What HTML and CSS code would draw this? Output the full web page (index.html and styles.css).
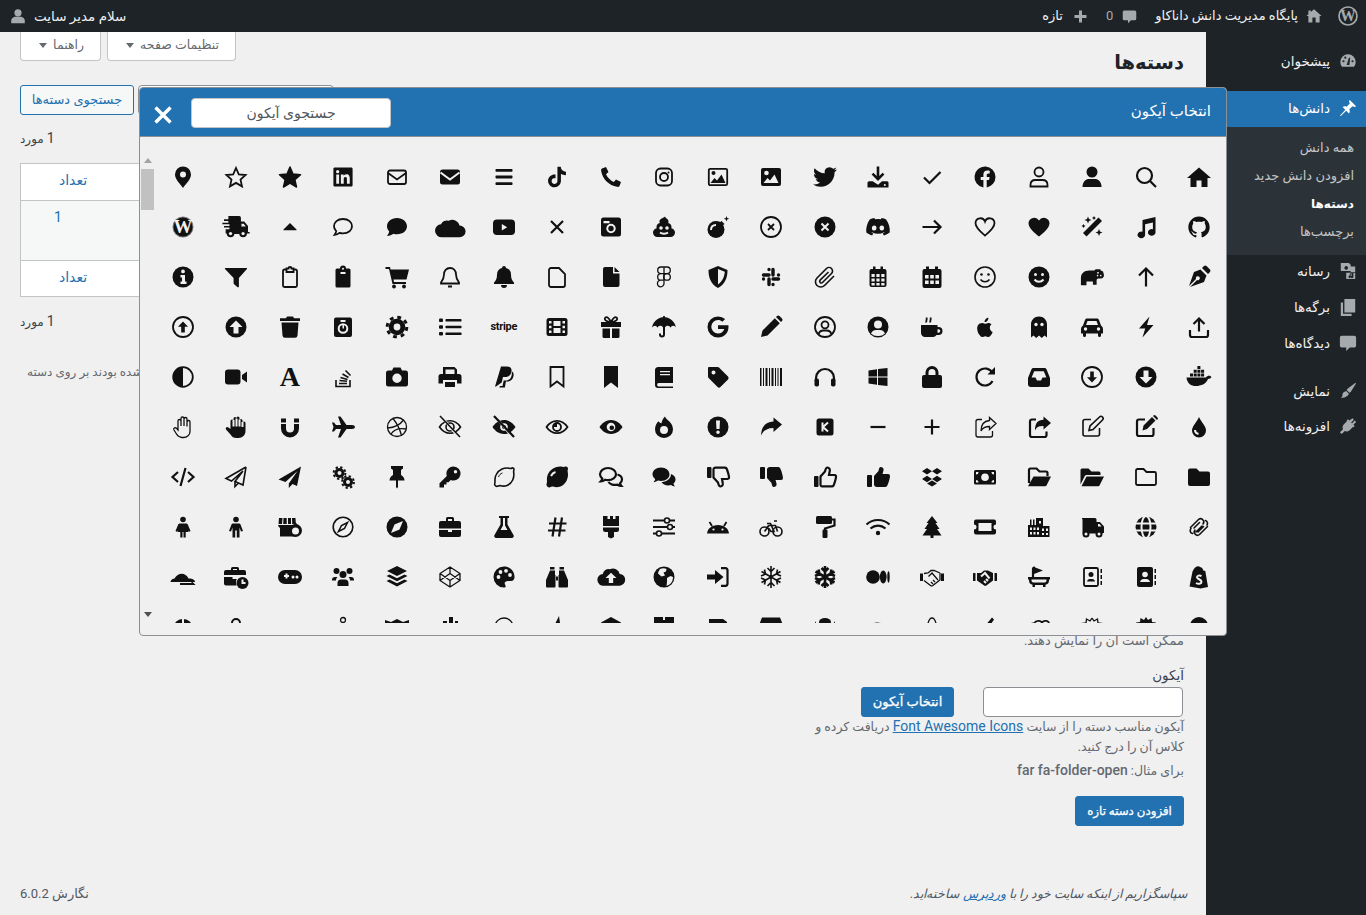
FILE: index.html
```html
<!DOCTYPE html>
<html lang="fa" dir="rtl">
<head>
<meta charset="utf-8">
<title>دسته‌ها</title>
<link rel="stylesheet" href="styles.css">
</head>
<body>
<header class="adminbar">
  <div class="ab-group">
    <svg class="ab-wp" viewBox="0 0 24 24"><circle class="ab-ring" cx="12" cy="12" r="10.800"/><text class="wp-w" x="12" y="18.500">W</text></svg>
    <svg class="ab-ic home" viewBox="0 0 20 20"><path d="M10 1.500 19.500 10H17v8h-5v-6H8v6H3v-8H.5L3 7.700V3h3v2z"/></svg>
    <a class="ab-text site">پایگاه مدیریت دانش داناکاو</a>
    <svg class="ab-ic cm" viewBox="0 0 20 20"><path d="M3 2h14a2 2 0 0 1 2 2v9a2 2 0 0 1-2 2h-5l-4 4v-4H3a2 2 0 0 1-2-2V4a2 2 0 0 1 2-2z"/></svg>
    <span class="ab-text zero">0</span>
    <svg class="ab-ic plus" viewBox="0 0 20 20"><path d="M8 2h4v6h6v4h-6v6H8v-6H2V8h6z"/></svg>
    <a class="ab-text">تازه</a>
  </div>
  <div class="ab-group user">
    <a class="ab-text greet">سلام مدیر سایت</a>
    <svg class="ab-ic usr" viewBox="0 0 20 20"><circle cx="10" cy="6" r="4.500"/><path d="M1.500 19v-3c0-3 3-5 5.500-5h6c2.500 0 5.500 2 5.500 5v3z"/></svg>
  </div>
</header>

<div class="shell">
  <nav class="sidebar">
    <a class="menu-item first"><svg class="mi" viewBox="0 0 20 20"><path fill-rule="evenodd" d="M10 2.500A8.500 8.500 0 0 0 1.500 11c0 2.200.8 4 2 5.500h13c1.200-1.500 2-3.300 2-5.500A8.500 8.500 0 0 0 10 2.500zM5 11.500a1.200 1.200 0 1 1 0-2.400 1.200 1.200 0 0 1 0 2.400zM7 7.500a1.200 1.200 0 1 1 0-2.400 1.200 1.200 0 0 1 0 2.400zM11.500 14.500h-3L11 6.500h1.500zM15 11.500a1.200 1.200 0 1 1 0-2.400 1.200 1.200 0 0 1 0 2.400z"/></svg><span>پیشخوان</span></a>
    <a class="menu-item active"><svg class="mi" viewBox="0 0 20 20"><path d="M12 1l7 7-1.500 1L15 8l-3.500 3.500c1 2 .5 4-.5 4.500l-3-3-6 6-1-.5 6-6.500-3-3c1-1 3-1.500 4.500-.5L12 5l-1-2.500z"/></svg><span>دانش‌ها</span></a>
    <div class="submenu">
      <a>همه دانش</a>
      <a>افزودن دانش جدید</a>
      <a class="current">دسته‌ها</a>
      <a>برچسب‌ها</a>
    </div>
    <a class="menu-item media"><svg class="mi" viewBox="0 0 20 20"><path d="M2 1h9l2 2v7H2zM6 6.500a2 2 0 1 0 0-.01zM8 12h10V19H8zM13 5h5v6h-5z"/><path class="mi-cut" d="M12 18a1.500 1.500 0 1 1 0-3V13l4-1v4.500a1.500 1.500 0 1 1-1.500-1.500V13.500l-1.500.5v3a1.500 1.500 0 0 1-1 1z"/></svg><span>رسانه</span></a>
    <a class="menu-item"><svg class="mi" viewBox="0 0 20 20"><path d="M6 1h12v15H6zM2 5h2.500v12.500H14V20H2z"/></svg><span>برگه‌ها</span></a>
    <a class="menu-item"><svg class="mi" viewBox="0 0 20 20"><path d="M3 2h14a2 2 0 0 1 2 2v9a2 2 0 0 1-2 2h-5l-4 4v-4H3a2 2 0 0 1-2-2V4a2 2 0 0 1 2-2z"/></svg><span>دیدگاه‌ها</span></a>
    <a class="menu-item sep"><svg class="mi" viewBox="0 0 20 20"><path d="M19 1.500l-1-.5-8.500 6.500-1 1.500 3 3 1.500-1zM8 10l3 3c-.5 2-3 4-9 5 2.500-2 1.500-3 2-5 .5-1.500 2.500-2.500 4-3z"/></svg><span>نمایش</span></a>
    <a class="menu-item tight"><svg class="mi" viewBox="0 0 20 20"><path d="M15 1.500l1.500 1.500-3 3 1 1 3-3L19 5.500l-3 3 1.500 1.500L16 11.500l-.5-.5-4 4c-2 1.500-4 1-5 .5L3 19l-2-2 3.500-3.500c-.5-1-1-3 .5-5l4-4-.5-.5L10 2.500 11.500 4z"/></svg><span>افزونه‌ها</span></a>
  </nav>

  <main class="main">
    <div class="top-row">
      <h1 class="title">دسته‌ها</h1>
      <div class="meta-links">
        <button class="meta-btn">تنظیمات صفحه <i class="caret"></i></button>
        <button class="meta-btn">راهنما <i class="caret"></i></button>
      </div>
    </div>

    <div class="columns">
      <section class="col-form">
        <p class="hint tail">ممکن است آن را نمایش دهند.</p>
        <label class="field-label">آیکون</label>
        <div class="field-row">
          <input class="field-input" type="text">
          <button class="btn-primary pick">انتخاب آیکون</button>
        </div>
        <p class="hint">آیکون مناسب دسته را از سایت <a class="link latin">Font Awesome Icons</a> دریافت کرده و<br>کلاس آن را درج کنید.</p>
        <p class="hint example">برای مثال: <b class="latin">far fa-folder-open</b></p>
        <button class="btn-primary submit">افزودن دسته تازه</button>
      </section>

      <section class="col-table">
        <div class="search-row">
          <button class="search-btn">جستجوی دسته‌ها</button>
          <input class="search-input" type="text">
        </div>
        <p class="count"><span class="latin">1</span> مورد</p>
        <table class="cats">
          <thead><tr><th>نام</th><th>توضیح</th><th>نامک</th><th class="num">تعداد</th></tr></thead>
          <tbody><tr><td>فناوری</td><td></td><td>tech</td><td class="val">1</td></tr></tbody>
          <tfoot><tr><th>نام</th><th>توضیح</th><th>نامک</th><th class="num">تعداد</th></tr></tfoot>
        </table>
        <p class="count lower"><span class="latin">1</span> مورد</p>
        <p class="note">با حذف یک دسته نوشته‌هایی که فقط به آن اختصاص داده شده بودند بر روی دسته</p>
      </section>
    </div>

    <footer class="footer">
      <em>سپاسگزاریم از اینکه سایت خود را با <a class="link">وردپرس</a> ساخته‌اید.</em>
      <span class="version">نگارش 6.0.2</span>
    </footer>
  </main>
</div>

<div class="picker">
  <div class="picker-head">
    <h2 class="picker-title">انتخاب آیکون</h2>
    <div class="picker-tools">
      <input class="picker-search" type="text" placeholder="جستجوی آیکون">
      <svg class="picker-close" viewBox="0 0 20 20"><path d="M2.500 2.500l15 15M17.500 2.500l-15 15"/></svg>
    </div>
  </div>
  <div class="picker-body">
    <div class="grid">
<!-- row 1 -->
<svg class="i" viewBox="0 0 24 24"><path d="M12 2.500 24 13h-3.500v9h-6v-6.500h-5V22h-6v-9H0z"/></svg>
<svg class="i o" viewBox="0 0 24 24"><circle cx="10.500" cy="10.500" r="7.500"/><path d="M16 16l6 6"/></svg>
<svg class="i" viewBox="0 0 24 24"><circle cx="12" cy="7" r="5.500"/><path d="M2.500 22c0-5.500 3.500-8 6.500-8h6c3 0 6.500 2.500 6.500 8z"/></svg>
<svg class="i o t" viewBox="0 0 24 24"><circle cx="12" cy="7" r="4.500"/><path d="M3.500 21.500V20c0-3 2-5 5-5h7c3 0 5 2 5 5v1.500z"/></svg>
<svg class="i" viewBox="0 0 24 24"><path d="M22.500 12a10.500 10.500 0 1 0-12.100 10.400v-7.300H7.700V12h2.700V9.700c0-2.600 1.600-4.100 4-4.100 1.100 0 2.300.2 2.300.2v2.600h-1.300c-1.300 0-1.700.8-1.700 1.600V12h2.900l-.5 3.100h-2.400v7.300A10.500 10.500 0 0 0 22.500 12z"/></svg>
<svg class="i o" viewBox="0 0 24 24"><path d="M4 12.500l5.500 5.500L20.500 7"/></svg>
<svg class="i" viewBox="0 0 24 24"><path d="M10.700 1.500h2.600v9.500l3.300-3.300 1.800 1.800-6.400 6.400-6.400-6.400 1.800-1.800 3.300 3.300zM1.500 18c0-1 .8-1.700 1.700-1.700h3.500l5.300 3.400 4-3.400h5c1 0 1.500.8 1.500 1.700v4.500H1.500z"/><circle class="b" cx="18.800" cy="20" r="1"/></svg>
<svg class="i" viewBox="0 0 24 24"><path d="M23.950 4.570a10 10 0 0 1-2.820.77 4.960 4.960 0 0 0 2.160-2.720c-.95.55-2 .96-3.120 1.190a4.920 4.920 0 0 0-8.380 4.480C7.690 8.100 4.070 6.130 1.640 3.160a4.820 4.820 0 0 0-.66 2.470c0 1.710.87 3.210 2.190 4.100a4.900 4.900 0 0 1-2.230-.61v.06c0 2.380 1.690 4.370 3.950 4.820a5 5 0 0 1-2.210.08c.63 1.950 2.450 3.370 4.600 3.410A9.870 9.870 0 0 1 0 19.540a13.940 13.940 0 0 0 7.550 2.210c9.060 0 14-7.500 14-13.980 0-.21 0-.42-.02-.63a9.940 9.940 0 0 0 2.460-2.550z"/></svg>
<svg class="i" viewBox="0 0 24 24"><rect x="2" y="3" width="20" height="18" rx="2"/><circle class="b" cx="7.500" cy="8" r="2.300"/><path class="b" d="M4.500 18l4-5 2.500 2.500 4.500-6 4 8.500z"/></svg>
<svg class="i" viewBox="0 0 24 24"><rect class="sk" x="2.800" y="3.800" width="18.400" height="16.400" rx="1.500"/><circle cx="7.500" cy="8" r="2"/><path d="M4.500 18l4-5 2.500 2.500 4.500-6 4 8.500z"/></svg>
<svg class="i" viewBox="0 0 24 24"><rect class="sk" x="4" y="3.500" width="16" height="17" rx="4.500"/><circle class="sk" cx="12" cy="12" r="4"/><circle cx="16.500" cy="7.500" r="1"/></svg>
<svg class="i" viewBox="0 0 24 24"><path d="M7 2 3 3.500C2 4 2 5 2.200 6 3.500 14 10 20.500 18 21.800c1 .2 2 .2 2.500-.8L22 17l-5-2.500-2.200 2.500C11.500 15.500 8.500 12.500 7 9.200L9.500 7z"/></svg>
<svg class="i" viewBox="-2 -2 28 28"><path d="M12.525.02c1.310-.02 2.610-.01 3.910-.02.08 1.530.63 3.090 1.750 4.170 1.120 1.110 2.700 1.620 4.240 1.790v4.030c-1.440-.05-2.890-.35-4.200-.97-.57-.26-1.100-.59-1.620-.93-.01 2.920.01 5.840-.02 8.750-.08 1.400-.54 2.790-1.350 3.940-1.310 1.920-3.580 3.170-5.910 3.210-1.430.08-2.860-.31-4.080-1.030-2.020-1.190-3.440-3.370-3.650-5.710-.02-.5-.03-1-.01-1.490.18-1.900 1.120-3.720 2.580-4.960 1.660-1.440 3.980-2.130 6.150-1.720.02 1.480-.04 2.960-.04 4.440-.99-.32-2.150-.23-3.020.37-.63.41-1.110 1.040-1.360 1.750-.21.51-.15 1.070-.14 1.610.24 1.640 1.820 3.020 3.500 2.870 1.120-.01 2.190-.66 2.770-1.610.19-.33.4-.67.41-1.060.1-1.790.06-3.570.07-5.360.01-4.030-.01-8.050.02-12.070z"/></svg>
<svg class="i" viewBox="0 0 24 24"><rect x="3.500" y="4" width="17" height="2.800" rx=".8"/><rect x="3.500" y="10.600" width="17" height="2.800" rx=".8"/><rect x="3.500" y="17.200" width="17" height="2.800" rx=".8"/></svg>
<svg class="i" viewBox="0 0 24 24"><rect x="2" y="4.500" width="20" height="15" rx="2.500"/><path class="bs" d="M2.500 7.500 12 14.500l9.500-7"/></svg>
<svg class="i" viewBox="0 0 24 24"><rect class="sk" x="3" y="5.500" width="18" height="13.500" rx="2"/><path class="sk" d="M3 8l9 6.500L21 8"/></svg>
<svg class="i" viewBox="-3 -3 30 30"><path fill-rule="evenodd" d="M20.447 20.452h-3.554v-5.569c0-1.328-.027-3.037-1.852-3.037-1.853 0-2.136 1.445-2.136 2.939v5.667H9.351V9h3.414v1.561h.046c.477-.9 1.637-1.850 3.370-1.850 3.601 0 4.267 2.370 4.267 5.455v6.286zM5.337 7.433a2.062 2.062 0 0 1-2.063-2.065 2.064 2.064 0 1 1 2.063 2.065zm1.782 13.019H3.555V9h3.564v11.452zM22.225 0H1.771C.792 0 0 .774 0 1.729v20.542C0 23.227.792 24 1.771 24h20.451C23.200 24 24 23.227 24 22.271V1.729C24 .774 23.200 0 22.222 0h.003z"/></svg>
<svg class="i" viewBox="0 0 24 24"><path d="M12 2l3 7 7.500.8-5.600 5 1.600 7.200-6.500-3.800-6.500 3.800 1.600-7.200-5.600-5L9 9z" stroke="#111" stroke-width="1.500" stroke-linejoin="round"/></svg>
<svg class="i" viewBox="0 0 24 24"><path class="sk" d="M12 3l2.800 6.300 6.800.7-5.100 4.600 1.500 6.800-6-3.500-6 3.500 1.500-6.800L2.400 10l6.800-.7z"/></svg>
<svg class="i" viewBox="0 0 24 24"><path fill-rule="evenodd" d="M12 1.500a8 8 0 0 0-8 8c0 5 5 9 8 13.500 3-4.500 8-8.500 8-13.500a8 8 0 0 0-8-8zm0 11a3 3 0 1 1 0-6 3 3 0 0 1 0 6z"/></svg>
<!-- row 2 -->
<svg class="i" viewBox="-1.500 -1.500 27 27"><path d="M12 .297c-6.630 0-12 5.373-12 12 0 5.303 3.438 9.800 8.205 11.385.6.113.82-.258.82-.577 0-.285-.01-1.040-.015-2.040-3.338.724-4.042-1.610-4.042-1.610C4.422 18.070 3.633 17.700 3.633 17.700c-1.087-.744.084-.729.084-.729 1.205.084 1.838 1.236 1.838 1.236 1.070 1.835 2.809 1.305 3.495.998.108-.776.417-1.305.76-1.605-2.665-.3-5.466-1.332-5.466-5.930 0-1.310.465-2.380 1.235-3.220-.135-.303-.54-1.523.105-3.176 0 0 1.005-.322 3.300 1.230.96-.267 1.980-.399 3-.405 1.020.006 2.040.138 3 .405 2.280-1.552 3.285-1.230 3.285-1.230.645 1.653.24 2.873.12 3.176.765.84 1.230 1.910 1.230 3.220 0 4.610-2.805 5.625-5.475 5.920.42.36.81 1.096.81 2.220 0 1.606-.015 2.896-.015 3.286 0 .315.21.69.825.57C20.565 22.092 24 17.592 24 12.297c0-6.627-5.373-12-12-12"/></svg>
<svg class="i" viewBox="0 0 24 24"><path d="M21.500 2 8.500 5v11.800a3.800 3.300 0 1 0 2.600 3.100V9.300l7.800-1.800v6.800a3.800 3.300 0 1 0 2.600 3.100z"/></svg>
<svg class="i" viewBox="0 0 24 24"><path d="M18.500 2.500l3.500 3.500L6.500 21.500 3 18z"/><path d="M8 1.500l1 2.500 2.500 1-2.500 1-1 2.500-1-2.500L4.500 5l2.500-1zM19 14l1 2.500 2.500 1-2.500 1-1 2.500-1-2.500-2.500-1 2.500-1zM14 1l.7 1.300L16 3l-1.300.7L14 5l-.7-1.300L12 3l1.300-.7zM3.500 9l.7 1.300L5.500 11l-1.300.7-.7 1.300-.7-1.300L1.500 11l1.300-.7z"/></svg>
<svg class="i" viewBox="0 0 24 24"><path d="M12 21.500C8 18 1.500 13.500 1.500 8A5.700 5.700 0 0 1 12 5.500 5.700 5.700 0 0 1 22.500 8c0 5.500-6.500 10-10.500 13.500z"/></svg>
<svg class="i o t" viewBox="0 0 24 24"><path d="M12 20.500C8.500 17.500 2.500 13 2.500 8A4.900 4.900 0 0 1 12 6.500 4.900 4.900 0 0 1 21.500 8c0 5-6 9.500-9.500 12.500z"/></svg>
<svg class="i o" viewBox="0 0 24 24"><path d="M2.500 12H20.500M14 5.500l6.500 6.500-6.500 6.500"/></svg>
<svg class="i" viewBox="0 0 24 24"><path d="M20.300 4.400A19 19 0 0 0 15.600 3l-.6 1.300a18 18 0 0 0-6 0L8.400 3a19 19 0 0 0-4.700 1.400C.7 8.900-.1 13.200.3 17.500a19 19 0 0 0 5.800 3l1.200-2a12 12 0 0 1-1.900-.9l.5-.4a13.700 13.700 0 0 0 12.200 0l.5.4a12 12 0 0 1-1.900.9l1.200 2a19 19 0 0 0 5.800-3c.5-5-.8-9.200-3.600-13.100z"/><ellipse class="b" cx="8.200" cy="13" rx="2.300" ry="2.600"/><ellipse class="b" cx="15.800" cy="13" rx="2.300" ry="2.600"/></svg>
<svg class="i" viewBox="0 0 24 24"><circle cx="12" cy="12" r="10.500"/><path class="bs" d="M8.500 8.500l7 7M15.500 8.500l-7 7" stroke-width="2.600"/></svg>
<svg class="i" viewBox="0 0 24 24"><circle class="sk" cx="12" cy="12" r="10"/><path class="sk" d="M9 9l6 6M15 9l-6 6"/></svg>
<svg class="i" viewBox="0 0 24 24"><circle cx="10" cy="14.500" r="8.500"/><path d="M15.500 6l3 3-2.500 2-3-3z"/><path d="M20.500 1l.7 2 2 .7-2 .7-.7 2-.7-2-2-.7 2-.7z"/><path class="bs" d="M5 15c0-3 2-5 5-5" stroke-width="1.800"/></svg>
<svg class="i" viewBox="0 0 24 24"><path d="M13 1.500c.5 2 3.500 2 3.500 5 0 .5 0 1-.3 1.500 1.800.3 3.300 2 3.300 4 0 .5 0 .8-.2 1.300 2 .4 3.700 2.100 3.700 4.200 0 2.500-2 4.500-4.500 4.500h-13C3 22 1 20 1 17.500c0-2 1.700-3.800 3.700-4.200-.2-.5-.2-.8-.2-1.300 0-2 1.500-3.700 3.300-4-.3-.5-.3-1-.3-1.500 0-3 3-3 5.500-5z"/><circle class="b" cx="9" cy="13" r="1.800"/><circle class="b" cx="15" cy="13" r="1.800"/><path class="bs" d="M8 17.500c2 1.500 6 1.500 8 0" stroke-width="1.700"/></svg>
<svg class="i" viewBox="0 0 24 24"><rect x="2" y="2.500" width="20" height="19" rx="2.500"/><path class="b" d="M4.500 6h6v2.200h-6z"/><circle class="b" cx="12" cy="13.500" r="4.700"/><circle cx="12" cy="13.500" r="2.700"/></svg>
<svg class="i o" viewBox="0 0 24 24"><path d="M6 6l12 12M18 6 6 18"/></svg>
<svg class="i" viewBox="0 0 24 24"><rect x="1" y="4.500" width="22" height="15.500" rx="4"/><path class="b" d="M9.800 9l5.400 3.200-5.400 3.200z"/></svg>
<svg class="i" viewBox="2 2 20 20"><path d="M6 20.500A5.500 5.500 0 0 1 -.5 15 5.500 5.500 0 0 1 4.500 9.700 5.200 5.200 0 0 1 11 6.800 6.300 6.300 0 0 1 20 10.800 5 5 0 0 1 25 15.500a5 5 0 0 1-5 5z"/></svg>
<svg class="i" viewBox="0 0 24 24"><path d="M12 3C6 3 2 6.800 2 11.300c0 2 .8 3.800 2.200 5.200C3.800 18.500 2.500 20 2 21c2.500 0 5-1 6.500-2.200a12 12 0 0 0 3.500.5c6 0 10-3.600 10-8S18 3 12 3z"/></svg>
<svg class="i" viewBox="0 0 24 24"><path class="sk" d="M12 4C6.500 4 3 7.300 3 11.300c0 2 .8 3.500 2.200 4.800-.3 1.800-1 2.800-1.700 3.800 2-.2 3.800-1 5-2 1.200.4 2.200.5 3.500.5 5.500 0 9-3.200 9-7.100S17.500 4 12 4z"/></svg>
<svg class="i" viewBox="0 0 24 24"><path d="M12 8l6.500 6.500a.5.5 0 0 1-.4.8H5.900a.5.5 0 0 1-.4-.8z"/></svg>
<svg class="i" viewBox="1 2 22 22"><path d="M5 3h10a1.500 1.500 0 0 1 1.500 1.500V8h3l3.500 4v5.500h1.500V19h-3v.5h-12V19H2.500v-4H6v-1.500H1V12h5V10.500H-.5V9H5V7.500H1V6h4z"/><circle cx="7" cy="19" r="3.500"/><circle cx="18.500" cy="19" r="3.500"/><circle class="b" cx="7" cy="19" r="1.500"/><circle class="b" cx="18.500" cy="19" r="1.500"/><path class="b" d="M17 10h2l2 2.500h-4z"/></svg>
<svg class="i" viewBox="0 0 24 24"><circle cx="12" cy="12" r="10.500" fill="#777"/><circle cx="12" cy="12" r="9.500"/><text class="wp-w light" x="12" y="18.200">W</text></svg>
<!-- row 3 -->
<svg class="i" viewBox="0 0 24 24"><path d="M15 3l6 6 2-2a2 2 0 0 0 0-2.500L19.500 1a2 2 0 0 0-2.500 0zM13.500 4.500 7 7 2 21l7-7a2 2 0 1 1 1 1l-7 7 14-5 2.500-6.500z"/></svg>
<svg class="i o" viewBox="0 0 24 24"><path d="M12 21.500V4M5 10.500l7-7 7 7"/></svg>
<svg class="i" viewBox="-1 0 26 24"><path d="M0 21V13C0 8 4 5 9 5h5.500l1.500-1.500h5l.5 1.500 2.500 1 1 4c0 2-1.500 3.500-3 3.500h-3c-.8 0-1.500.5-2 1.500v5.500h-4V17H6v4z"/><circle class="b" cx="18.500" cy="7.500" r="1"/><circle class="b" cx="21.500" cy="10.500" r=".9"/><circle class="b" cx="18" cy="10.500" r=".9"/></svg>
<svg class="i" viewBox="0 0 24 24"><circle cx="12" cy="12" r="10.500"/><circle class="b" cx="8.500" cy="9.500" r="1.500"/><circle class="b" cx="15.500" cy="9.500" r="1.500"/><path class="bs" d="M7.500 14.500c2.500 3 6.500 3 9 0" stroke-width="2"/></svg>
<svg class="i" viewBox="0 0 24 24"><circle class="sk t2" cx="12" cy="12" r="10"/><circle cx="8.500" cy="9.500" r="1.300"/><circle cx="15.500" cy="9.500" r="1.300"/><path class="sk t2" d="M7.500 14.500c2.500 3 6.500 3 9 0"/></svg>
<svg class="i" viewBox="0 0 24 24"><path d="M6 1.500h3V4h6V1.500h3V4h1.500A2 2 0 0 1 21.500 6v15a2 2 0 0 1-2 2h-15a2 2 0 0 1-2-2V6a2 2 0 0 1 2-2H6z"/><path class="b" d="M5 10h3.600v3.500H5zM10.200 10h3.600v3.500h-3.600zM15.400 10H19v3.500h-3.600zM5 15.500h3.600V19H5zM10.200 15.500h3.600V19h-3.600zM15.400 15.500H19V19h-3.600z"/></svg>
<svg class="i" viewBox="0 0 24 24"><path d="M7 1.500h2.500V4h5V1.500H17V4h1.500A2 2 0 0 1 20.500 6v14a2 2 0 0 1-2 2h-13a2 2 0 0 1-2-2V6a2 2 0 0 1 2-2H7z"/><path class="b" d="M5.500 9h3.200v3H5.500zM10.400 9h3.200v3h-3.200zM15.300 9h3.200v3h-3.200zM5.500 13.500h3.200v3H5.500zM10.400 13.500h3.200v3h-3.200zM15.300 13.500h3.200v3h-3.200zM5.500 18h3.200v2.500H5.500zM10.400 18h3.200v2.500h-3.200zM15.300 18h3.200v2.500h-3.200z"/></svg>
<svg class="i o thin" viewBox="0 0 24 24"><path d="M21 11 11.500 20.500a5.200 5.200 0 0 1-7.500-7.500L13.500 3.500a3.500 3.500 0 0 1 5 5L9.500 17.500a1.700 1.700 0 0 1-2.400-2.400L15.500 7"/></svg>
<svg class="i o slack" viewBox="0 0 24 24"><path d="M4.500 10H10M10 4.500h.01M14 4.500V10M19.500 10h.01M19.500 14H14M14 19.500h.01M10 19.500V14M4.500 14h.01"/></svg>
<svg class="i" viewBox="0 0 24 24"><path fill-rule="evenodd" d="M12 1 21.500 5c0 8-2.500 14-9.500 18C5 19 2.500 13 2.500 5zM12 4v15.500c4.500-3 6.500-8 6.800-12.700z"/></svg>
<svg class="i o hair" viewBox="0 0 24 24"><path d="M12 2H9a3.300 3.300 0 0 0 0 6.600h3zM12 8.600H9a3.300 3.300 0 0 0 0 6.600h3zM12 15.200H9a3.300 3.300 0 1 0 3 3.300zM12 2h3a3.300 3.300 0 0 1 0 6.600h-3z"/><circle cx="15" cy="11.900" r="3.300"/></svg>
<svg class="i" viewBox="0 0 24 24"><path d="M6 2h8v6.500h6.500V20a2 2 0 0 1-2 2H6a2 2 0 0 1-2-2V4a2 2 0 0 1 2-2zM15.500 2 20.500 7h-5z"/></svg>
<svg class="i o t2" viewBox="0 0 24 24"><path d="M6 3h8l6 6v11a2 2 0 0 1-2 2H6a2 2 0 0 1-2-2V5a2 2 0 0 1 2-2z"/></svg>
<svg class="i" viewBox="0 0 24 24"><path d="M12 1a2 2 0 0 1 2 2c3 .7 5 3 5 6.500 0 4 1 6 3 8v1.500H2V17.500c2-2 3-4 3-8C5 6 7 3.700 10 3a2 2 0 0 1 2-2zM9 20h6a3 3 0 0 1-6 0z"/></svg>
<svg class="i o t2" viewBox="0 0 24 24"><path d="M12 3c3.700 0 6 2.800 6 6.500 0 3.500 1 5.500 3 8v1H3v-1c2-2.500 3-4.500 3-8C6 5.800 8.300 3 12 3zM10 21.500h4"/></svg>
<svg class="i" viewBox="0 0 24 24"><path d="M.5 2h4.500l.6 2.500H24L21.500 14.500H8.500l.5 2.500h12v2H7.500L4 4H.5z"/><circle cx="9" cy="21.500" r="1.900"/><circle cx="19" cy="21.500" r="1.900"/></svg>
<svg class="i" viewBox="0 0 24 24"><path d="M9 3.500a3 3 0 0 1 6 0h3a1.500 1.500 0 0 1 1.500 1.500v16A1.500 1.500 0 0 1 18 22.500H6A1.500 1.500 0 0 1 4.500 21V5A1.500 1.500 0 0 1 6 3.500z"/><path class="bs" d="M9.500 8h5" stroke-width="1.300"/><circle class="b" cx="12" cy="3.700" r="1"/></svg>
<svg class="i o t2" viewBox="0 0 24 24"><path d="M8.500 4.500H6.500A1.500 1.500 0 0 0 5 6v14.500A1.500 1.500 0 0 0 6.500 22h11a1.500 1.500 0 0 0 1.500-1.500V6a1.500 1.500 0 0 0-1.500-1.500h-2M8.500 3.500h2a1.500 1.500 0 0 1 3 0h2v3.500h-7z"/></svg>
<svg class="i" viewBox="0 0 24 24"><path d="M1.500 3h21c.5 0 .8.6.4 1l-8 9v8.500c0 .8-.8 1-1.300.7l-3.500-3c-.3-.2-.5-.5-.5-1v-5.200L1 4C.7 3.600 1 3 1.500 3z"/></svg>
<svg class="i" viewBox="0 0 24 24"><circle cx="12" cy="12" r="10.500"/><path class="b" d="M12 4.500a1.900 1.900 0 1 1 0 3.800 1.900 1.900 0 0 1 0-3.800zM9.500 10H14v6.500h1.500V19h-6v-2.500H11V12.500H9.500z"/></svg>
<!-- row 4 -->
<svg class="i o" viewBox="0 0 24 24"><path d="M12 16.500V3.500M6.500 9 12 3.500 17.500 9M3 15v5a2 2 0 0 0 2 2h14a2 2 0 0 0 2-2v-5"/></svg>
<svg class="i" viewBox="0 0 24 24"><path d="M15.500 1.500 5 13.500h6.200L8.500 22.500l11-12.500h-6.500z"/></svg>
<svg class="i" viewBox="0 0 24 24"><path d="M7 3.500h10c1 0 1.700.6 2 1.500l2 5.500a4 4 0 0 1 2 3.500v4.500h-2v2a1.500 1.500 0 0 1-3 0v-2H6v2a1.500 1.500 0 0 1-3 0v-2H1V14a4 4 0 0 1 2-3.500L5 5c.3-.9 1-1.500 2-1.500z"/><path class="b" d="M7.500 6h9l1.500 4H6z"/><circle class="b" cx="5.500" cy="14" r="1.700"/><circle class="b" cx="18.500" cy="14" r="1.700"/></svg>
<svg class="i" viewBox="0 0 24 24"><path d="M12 1.500c4.500 0 8 3.500 8 8V22.500l-2.500-2-2.700 2.500-2.800-2.500-2.800 2.500-2.700-2.500L4 22.500V9.500c0-4.500 3.500-8 8-8z"/><circle class="b" cx="9" cy="9.500" r="1.700"/><circle class="b" cx="15" cy="9.500" r="1.700"/></svg>
<svg class="i" viewBox="0 0 24 24"><path d="M16.800 12.600c0-2 1.600-3 1.700-3.100-1-1.400-2.400-1.600-3-1.600-1.300-.1-2.500.8-3.100.8s-1.600-.8-2.700-.8C7.300 7.900 5.800 8.800 5 10.200c-1.700 2.800-.4 7 1.200 9.400.8 1.200 1.800 2.500 3 2.400 1.200 0 1.700-.8 3.100-.8s1.900.8 3.100.8 2.100-1.200 2.900-2.300c.9-1.300 1.300-2.600 1.300-2.700-.1 0-2.800-1.100-2.800-4.400zM14.400 5.800c.7-.8 1.100-1.900 1-3-1 0-2.100.6-2.800 1.400-.6.7-1.200 1.800-1 2.900 1.100.1 2.200-.6 2.800-1.300z"/></svg>
<svg class="i" viewBox="0 0 24 24"><path d="M1 10h16.500v2h1a4 4 0 0 1 0 8h-2c-.8 1.300-2 2-3.500 2H5c-2.200 0-4-1.800-4-4zM17.500 14.200v3.600h1a1.800 1.800 0 0 0 0-3.600z"/><path class="sk" d="M6.500 7.500c-1-2 1-2.500 0-5M10.500 7.500c-1-2 1-2.500 0-5"/></svg>
<svg class="i" viewBox="0 0 24 24"><circle cx="12" cy="12" r="10.500"/><circle class="b" cx="12" cy="9.500" r="4"/><path class="b" d="M5 18.500c1-2.500 3-3.500 5-3.500h4c2 0 4 1 5 3.500A9.500 9.500 0 0 1 12 21a9.500 9.500 0 0 1-7-2.500z"/></svg>
<svg class="i" viewBox="0 0 24 24"><circle class="sk" cx="12" cy="12" r="10"/><circle class="sk" cx="12" cy="9.800" r="3.500"/><path class="sk" d="M5.500 19c1-2.500 3-3.500 4.500-3.500h4c1.500 0 3.500 1 4.500 3.500"/></svg>
<svg class="i" viewBox="0 0 24 24"><path d="M2 22l1.500-6.500L15.800 3.200 20.800 8.200 8.500 20.500zM17 2l1-1a2 2 0 0 1 2.500 0L23 3.500A2 2 0 0 1 23 6l-1 1z"/></svg>
<svg class="i" viewBox="0 0 24 24"><path d="M22.400 10.300H12v3.700h6.200c-.6 2.700-3 4.500-6.200 4.500a6.700 6.700 0 0 1 0-13.400c1.700 0 3.200.6 4.400 1.700l2.700-2.700A10.500 10.500 0 0 0 12 1.500a10.500 10.500 0 1 0 0 21c6 0 10.500-4.200 10.500-10.500 0-.6 0-1.200-.1-1.700z"/></svg>
<svg class="i" viewBox="0 0 24 24"><path d="M12 1a1 1 0 0 1 1 1.300c5.500.5 10 4.700 11 10.200-.5-1-1.500-1.700-2.700-1.700-1.300 0-2.400.9-2.800 2-.4-1.100-1.500-2-2.800-2-1.200 0-2.200.6-2.700 1.700v7a3 3 0 0 1-6 0v-1h2v1a1 1 0 0 0 2 0v-7c-.5-1.100-1.500-1.700-2.700-1.700-1.300 0-2.400.9-2.800 2-.4-1.100-1.500-2-2.800-2C2.500 10.800 1 11.500 0 12.500 1 7 5.500 2.800 11 2.300A1 1 0 0 1 12 1z"/></svg>
<svg class="i" viewBox="0 0 24 24"><path d="M2 7h20v5H2zM3.500 13.500h7.500V23H5a1.500 1.500 0 0 1-1.500-1.500zM13 13.500h7.500v8A1.500 1.500 0 0 1 19 23h-6z"/><path class="sk" d="M12 7C10 3 8 1.500 6.500 2.500c-2 1.500.5 4.500 5.500 4.500zM12 7c2-4 4-5.500 5.500-4.500 2 1.500-.5 4.500-5.500 4.500z"/></svg>
<svg class="i" viewBox="0 0 24 24"><rect x="1.500" y="3" width="21" height="18" rx="2.500"/><path class="b" d="M4 6h2.500v2.500H4zM4 10.800h2.500v2.500H4zM4 15.500h2.500V18H4zM17.500 6H20v2.500h-2.500zM17.500 10.800H20v2.500h-2.500zM17.500 15.500H20V18h-2.500zM8.500 6h7v5h-7zM8.500 13h7v5h-7z"/></svg>
<span class="i-text stripe">stripe</span>
<svg class="i" viewBox="0 0 24 24"><rect x="1" y="3.500" width="4" height="3.500" rx="1"/><rect x="1" y="10.200" width="4" height="3.500" rx="1"/><rect x="1" y="17" width="4" height="3.500" rx="1"/><rect x="7.500" y="4" width="16" height="2.600" rx=".7"/><rect x="7.500" y="10.700" width="16" height="2.600" rx=".7"/><rect x="7.500" y="17.500" width="16" height="2.600" rx=".7"/></svg>
<svg class="i" viewBox="0 0 24 24"><circle cx="12" cy="12" r="9.800" class="gear"/><circle cx="12" cy="12" r="8.300"/><circle class="b" cx="12" cy="12" r="3.400"/></svg>
<svg class="i" viewBox="0 0 24 24"><rect x="3" y="2.500" width="18" height="19.500" rx="2"/><circle class="bs" cx="12" cy="13.500" r="4.300" stroke-width="2"/><path class="b" d="M9.500 5h5v2h-5zM11.500 10h1.500v3.500h-1.500z"/></svg>
<svg class="i" viewBox="0 0 24 24"><path d="M9 1.500h6l1 1.700h6V6H2V3.200h6zM3.500 7.500h17l-1 13a2.500 2.500 0 0 1-2.500 2.300H7A2.500 2.500 0 0 1 4.500 20.500z"/></svg>
<svg class="i" viewBox="0 0 24 24"><circle cx="12" cy="12" r="10.500"/><path class="b" d="M12 5.500l6.500 6.500h-4v6.500h-5V12h-4z"/></svg>
<svg class="i" viewBox="0 0 24 24"><circle class="sk" cx="12" cy="12" r="10"/><path d="M12 6.500l5 5.300h-3.200V17.500h-3.600v-5.700H7z"/></svg>
<!-- row 5 -->
<svg class="i" viewBox="0 0 24 24"><path d="M-.5 12.500H19c.5-1.500 3-2 3.800-1.700 1 .3 1.200 1 1.700 1.200-.8 1.200-1.800 2-3.500 2C19 19 14 21 9 21c-5 0-9-2.500-9.500-8.500z"/><path d="M3 8.500h3v3H3zM6.700 8.500h3v3h-3zM10.400 8.500h3v3h-3zM14.100 8.500h3v3h-3zM6.700 4.800h3v3h-3zM10.400 4.800h3v3h-3zM14.100 4.800h3v3h-3zM10.400 1.100h3v3h-3z"/></svg>
<svg class="i" viewBox="0 0 24 24"><circle cx="12" cy="12" r="10.500"/><path class="b" d="M12 18.500 5.500 12h4V5.500h5V12h4z"/></svg>
<svg class="i" viewBox="0 0 24 24"><circle class="sk" cx="12" cy="12" r="10"/><path d="M12 17.500l-5-5.300h3.200V6.500h3.600v5.700H17z"/></svg>
<svg class="i" viewBox="0 0 24 24"><path fill-rule="evenodd" d="M6.500 3h11c1 0 1.800.6 2.100 1.500L23 13v6a3 3 0 0 1-3 3H4a3 3 0 0 1-3-3v-6l3.400-8.500C4.700 3.600 5.500 3 6.500 3zm.7 3.300-2.600 6.200H8.500l1.500 3h4l1.500-3h3.900l-2.600-6.200z"/></svg>
<svg class="i o" viewBox="0 0 24 24"><path d="M19.500 8A8.500 8.500 0 1 0 19.500 16"/><path class="fillp" d="M14.500 9.500 22 2v7.500z"/></svg>
<svg class="i" viewBox="0 0 24 24"><path fill-rule="evenodd" d="M12 1a6.500 6.500 0 0 1 6.500 6.500V10H20a2 2 0 0 1 2 2v9a2 2 0 0 1-2 2H4a2 2 0 0 1-2-2v-9a2 2 0 0 1 2-2h1.500V7.500A6.500 6.500 0 0 1 12 1zm0 3a3.500 3.500 0 0 0-3.500 3.500V10h7V7.500A3.500 3.500 0 0 0 12 4z"/></svg>
<svg class="i" viewBox="0 0 24 24"><path d="M2.500 5.500l8.500-1.300v7.300H2.500zM12 4.100 21.500 3v8.500H12zM2.500 12.500H11v7.300l-8.500-1.300zM12 12.500h9.500V21L12 19.900z"/></svg>
<svg class="i" viewBox="0 0 24 24"><path class="sk t3" d="M3 16v-3a9 9 0 0 1 18 0v3"/><rect x="1.500" y="13.500" width="4.500" height="8" rx="1.800"/><rect x="18" y="13.500" width="4.500" height="8" rx="1.800"/></svg>
<svg class="i" viewBox="0 0 24 24"><path d="M1 3h1.500v18H1zM4 3h1v18H4zM6.500 3h2v18h-2zM10 3h1v18h-1zM12.500 3h2v18h-2zM16 3h1v18h-1zM18.500 3h1v18h-1zM21 3h2v18h-2z"/></svg>
<svg class="i" viewBox="0 0 24 24"><path fill-rule="evenodd" d="M3 2h8.500a2 2 0 0 1 1.500.6l9 9a2 2 0 0 1 0 2.800l-7.600 7.600a2 2 0 0 1-2.800 0l-9-9A2 2 0 0 1 2 11.500V3a1 1 0 0 1 1-1zm4.500 3.500a2 2 0 1 0 0 4 2 2 0 0 0 0-4z"/></svg>
<svg class="i" viewBox="0 0 24 24"><path d="M6.500 2H21v16H6.500a1.800 1.800 0 0 0 0 3.500H21V23H6a3 3 0 0 1-3-3V5a3 3 0 0 1 3.500-3z"/><path class="b" d="M8 6h10v1.300H8zM8 9h10v1.300H8z"/></svg>
<svg class="i" viewBox="0 0 24 24"><path d="M5 1h14v22l-7-5.500L5 23z"/></svg>
<svg class="i o t2" viewBox="0 0 24 24"><path d="M5.500 2h13v19.500L12 16.500 5.500 21.500z"/></svg>
<svg class="i" viewBox="0 0 24 24"><path d="M9 1.500h6c3.500 0 5 2 4.500 5-.5 3.500-3 5.500-6.500 5.500h-2L9.700 17.500 4 21.500H3z"/><path d="M19.900 6.500c1.800 1 2 3 1.500 5-.7 3-3 5-6 5h-1.500l-1 6H7.500l.3-1.500h2.700l1.200-5.500h2c3.500 0 6.500-2.500 6.200-9z"/></svg>
<svg class="i" viewBox="0 0 24 24"><path d="M5 2h11.500L19 4.500V9h-2.500V4.500h-9V9H5z"/><path d="M3 9h18a2.500 2.500 0 0 1 2.500 2.500v7H19V15H5v3.500H.5v-7A2.500 2.500 0 0 1 3 9z"/><rect x="7" y="17" width="10" height="5"/></svg>
<svg class="i" viewBox="0 0 24 24"><path fill-rule="evenodd" d="M8.500 2.500h7L17 5.500h4a2.500 2.500 0 0 1 2 2.500v11a2.500 2.500 0 0 1-2.500 2.500h-17A2.500 2.500 0 0 1 1 19V8a2.500 2.500 0 0 1 2.500-2.500H7zM12 8.500a4.700 4.700 0 1 0 0 9.400 4.700 4.700 0 0 0 0-9.400z"/></svg>
<svg class="i o thin" viewBox="0 0 24 24"><path d="M5 15v6.500h14V15M8 18.500h8M8.500 15.500l7.500.7M9.500 12.500l7 2M11.500 9l6 3.500M14.500 5.500l5 5"/></svg>
<span class="i-text glyph-a">A</span>
<svg class="i" viewBox="0 0 24 24"><rect x="1" y="4.500" width="15.500" height="15" rx="3"/><path d="M18 10l5-3.500v11L18 14z"/></svg>
<svg class="i" viewBox="0 0 24 24"><circle class="sk" cx="12" cy="12" r="9.800"/><path d="M12 2a10 10 0 0 0 0 20z"/></svg>
<!-- row 6 -->
<svg class="i" viewBox="0 0 24 24"><path d="M12 2C10 7 5 11 5 15.500a7 7 0 0 0 14 0C19 11 14 7 12 2z"/><path class="bs" d="M8 15c0 2 1.500 3.500 3.500 4" stroke-width="1.500"/></svg>
<svg class="i" viewBox="0 0 24 24"><path class="sk t3" d="M11 4.500H5A2 2 0 0 0 3 6.500V19a2 2 0 0 0 2 2h12.500a2 2 0 0 0 2-2v-6"/><path d="M8.500 15.500 9.500 10.500 18 2l3.500 3.500L13 14zM19 1l.5-.5a1.500 1.500 0 0 1 2 0l2 2a1.500 1.500 0 0 1 0 2l-.5.5z"/></svg>
<svg class="i o thin" viewBox="0 0 24 24"><path d="M11 4.500H5A2 2 0 0 0 3 6.500V19a2 2 0 0 0 2 2h12.500a2 2 0 0 0 2-2v-6M9 15.500l1-4.500 9.500-9a1.700 1.700 0 0 1 3 3L13 14.500z"/></svg>
<svg class="i" viewBox="0 0 24 24"><path class="sk t3" d="M9 4.500H5A2 2 0 0 0 3 6.500V20a2 2 0 0 0 2 2h12.500a2 2 0 0 0 2-2v-3.500"/><path d="M24 8 16.500 1.500v3.300C11 5 8 8 8 15.500 10 11.500 12.500 11 16.500 11v3.500z"/></svg>
<svg class="i o hair" viewBox="0 0 24 24"><path d="M9 4.500H5A2 2 0 0 0 3 6.500V20a2 2 0 0 0 2 2h12.500a2 2 0 0 0 2-2v-4M23 8.500 16.500 2.500v3C11 6 8 9 8 16c2-4 4.500-4.500 8.500-4.500v3z"/></svg>
<svg class="i o" viewBox="0 0 24 24"><path d="M12 4.500v15M4.500 12h15"/></svg>
<svg class="i o" viewBox="0 0 24 24"><path d="M4.500 12h15"/></svg>
<svg class="i" viewBox="0 0 24 24"><rect x="3.500" y="3.500" width="17" height="17" rx="2.500"/><path class="bs" d="M9.500 7.500v9M15 7.500l-5 4.500 5 4.500" stroke-width="2.800"/></svg>
<svg class="i" viewBox="0 0 24 24"><path d="M23 9.500 14.500 2.500v4C7 7 2.500 11 2 20.500c2-5 6.500-7.500 12.500-7.500v4z"/></svg>
<svg class="i" viewBox="0 0 24 24"><circle cx="12" cy="12" r="10.500"/><path class="b" d="M10 5.500h4l-.5 8.500h-3zM12 15.500a1.800 1.800 0 1 1 0 3.600 1.800 1.800 0 0 1 0-3.600z"/></svg>
<svg class="i" viewBox="0 0 24 24"><path fill-rule="evenodd" d="M13 1.500C14 5 21 7 21 14.500a9 8.500 0 0 1-18 0C3 11 4.500 8 6.500 6.200c.7 1 1.500 1.800 3 2.100C9.800 6 11 3.500 13 1.500zM12 11a4 4 0 1 0 0 8 4 4 0 0 0 0-8z"/></svg>
<svg class="i" viewBox="0 0 24 24"><path d="M12 5C6 5 2.500 9 .5 12c2 3 5.500 7 11.500 7s9.500-4 11.500-7C21.500 9 18 5 12 5z"/><circle class="b" cx="12" cy="12" r="4.300"/><circle cx="12.800" cy="12.800" r="2.300"/></svg>
<svg class="i" viewBox="0 0 24 24"><path class="sk" d="M12 5.800C7 5.800 3.500 9 1.500 12c2 3 5.500 6.200 10.500 6.200s8.500-3.200 10.500-6.200C20.500 9 17 5.800 12 5.800z"/><circle class="sk" cx="12" cy="12" r="4"/><path d="M12 8.500a3.500 3.500 0 0 0-3.500 3.500h3.500z"/></svg>
<svg class="i" viewBox="0 0 24 24"><path d="M12 5C6 5 2.500 9 .5 12c2 3 5.500 7 11.500 7s9.500-4 11.500-7C21.500 9 18 5 12 5z"/><circle class="b" cx="12" cy="12" r="3.800"/><circle cx="12" cy="12" r="2"/><path class="bs" d="M3 1l18 22" stroke-width="4"/><path class="sk t3" d="M2 1l20 21"/></svg>
<svg class="i" viewBox="0 0 24 24"><path class="sk t2" d="M12 5.800C7 5.800 3.500 9 1.500 12c2 3 5.500 6.200 10.500 6.200s8.500-3.200 10.500-6.200C20.500 9 17 5.800 12 5.800z"/><circle class="sk t2" cx="12" cy="12" r="4"/><path class="bs" d="M3 1l18 22" stroke-width="3"/><path class="sk t2" d="M2 1l20 21"/></svg>
<svg class="i o hair" viewBox="0 0 24 24"><circle cx="12" cy="12" r="9.500"/><path d="M8 3.500c4 5 7 11 8.500 17M2.500 13c6-.5 12-2.500 16-8M6 19c2.500-4 7-6.500 15.500-5"/></svg>
<svg class="i" viewBox="0 0 24 24"><path d="M24 12c0-1.300-1.500-2-3-2h-5.500L9.500 1.500H7L10 10H5L3 7.500H1L2.500 12 1 16.500h2L5 14h5L7 22.500h2.500l6-8.500H21c1.500 0 3-.7 3-2z"/></svg>
<svg class="i" viewBox="0 0 24 24"><path d="M3 3.500h5v4H3zM16 3.500h5v4h-5zM3 9h5v4.500a4 4 0 0 0 8 0V9h5v4.500a9 9 0 0 1-18 0z"/></svg>
<svg class="i" viewBox="0 0 24 24"><path d="M6.500 14V6a1.500 1.500 0 0 1 3 0V3.500a1.500 1.500 0 0 1 3 0V3a1.500 1.500 0 0 1 3 0v2.500a1.500 1.500 0 0 1 3 0V8a1.500 1.500 0 0 1 3 0v8c0 4-3 7-7 7h-2c-3 0-4.500-1-6-3.500L2 14.500c-1-1.700 1-3.500 2.500-2z"/><path class="bs" d="M9.500 5v6.500M12.500 3.500v8M15.500 4.500v7M18.500 7v5" stroke-width="1"/></svg>
<svg class="i o hair" viewBox="0 0 24 24"><path d="M7 14V6a1.500 1.500 0 0 1 3 0v5V3.500a1.500 1.500 0 0 1 3 0V11V4a1.500 1.500 0 0 1 3 0v7.500V7a1.500 1.500 0 0 1 3 0v9.500c0 3.500-3 6-6.500 6H11c-2.500 0-4-1-5.500-3.500L3 15c-1-1.700 1-3 2.500-1.700L7 15z"/></svg>
<!-- row 7 -->
<svg class="i" viewBox="0 0 24 24"><path d="M1 5.500a2 2 0 0 1 2-2h6.500l3 3H21a2 2 0 0 1 2 2V19a2 2 0 0 1-2 2H3a2 2 0 0 1-2-2z"/></svg>
<svg class="i o t2" viewBox="0 0 24 24"><path d="M2 5.500a1.500 1.500 0 0 1 1.500-1.500h6l3 3h8a1.500 1.500 0 0 1 1.500 1.500v10a1.500 1.500 0 0 1-1.500 1.500h-17A1.500 1.500 0 0 1 2 18.500z"/></svg>
<svg class="i" viewBox="0 0 24 24"><path d="M.5 5a1.500 1.500 0 0 1 1.500-1.500h6.500l3 3H19a1.500 1.500 0 0 1 1.500 1.500V10H6.500a2 2 0 0 0-1.800 1.200L.5 19.500z"/><path d="M6.500 11.500H24L19.500 20.500a1.500 1.500 0 0 1-1.300.8H1.500z"/></svg>
<svg class="i" viewBox="0 0 24 24"><path class="sk t3" d="M2 18V5a1.500 1.500 0 0 1 1.500-1.500h6l3 3H19a1.500 1.500 0 0 1 1.500 1.500v3"/><path d="M6.500 11.500H24L19.500 20.500a1.500 1.500 0 0 1-1.300.8H1z"/></svg>
<svg class="i" viewBox="0 0 24 24"><rect x="1" y="5" width="22" height="14.500" rx="1.500"/><circle class="b" cx="12" cy="12.200" r="3.800"/><path class="b" d="M3 7h2.500a2.500 2.500 0 0 1-2.500 2.500zM21 7h-2.500A2.500 2.500 0 0 0 21 9.500zM3 17.500h2.500A2.500 2.500 0 0 0 3 15zM21 17.500h-2.500a2.500 2.500 0 0 1 2.500-2.500z"/></svg>
<svg class="i" viewBox="0 0 24 24"><path d="M7 3l5 3.300-5 3.300-5-3.300zM17 3l5 3.300-5 3.300-5-3.300zM7 10.800 12 14l-5 3.300L2 14zM17 10.800 22 14l-5 3.300L12 14zM7 18.500l5-3 5 3-5 3z"/></svg>
<svg class="i" viewBox="0 0 24 24"><rect x="1" y="10" width="5" height="12" rx="1"/><path d="M8 20v-9l4.500-5c.5-2 .5-4 2.500-4a3 3 0 0 1 2.500 3.500L16.500 9H22a2 2 0 0 1 2 2.200c0 1.800-2 8.800-3 9.800a2 2 0 0 1-2 1H11a3 3 0 0 1-3-2z"/></svg>
<svg class="i" viewBox="0 0 24 24"><rect x="1" y="11" width="4.500" height="11" rx="1"/><path class="sk t3" d="M7.500 20.500V11.500l4.500-5c.5-2 .7-4 2.500-4a2.700 2.700 0 0 1 2.300 3.300L16 10h5.500a1.800 1.800 0 0 1 1.500 2c0 1.500-1.800 7.500-2.500 8.500a2 2 0 0 1-1.800.8H10a2.500 2.500 0 0 1-2.500-1z"/></svg>
<svg class="i" viewBox="0 0 24 24"><g transform="matrix(1 0 0 -1 0 24)"><rect x="1" y="10" width="5" height="12" rx="1"/><path d="M8 20v-9l4.500-5c.5-2 .5-4 2.500-4a3 3 0 0 1 2.500 3.500L16.500 9H22a2 2 0 0 1 2 2.200c0 1.800-2 8.800-3 9.800a2 2 0 0 1-2 1H11a3 3 0 0 1-3-2z"/></g></svg>
<svg class="i" viewBox="0 0 24 24"><g transform="matrix(1 0 0 -1 0 24)"><rect x="1" y="11" width="4.500" height="11" rx="1"/><path class="sk t3" d="M7.500 20.500V11.500l4.500-5c.5-2 .7-4 2.500-4a2.700 2.700 0 0 1 2.300 3.300L16 10h5.500a1.800 1.800 0 0 1 1.500 2c0 1.500-1.800 7.500-2.500 8.500a2 2 0 0 1-1.800.8H10a2.500 2.500 0 0 1-2.500-1z"/></g></svg>
<svg class="i" viewBox="0 0 24 24"><path d="M9 2.500c5 0 8.500 3 8.500 6.800S14 16 9 16c-1 0-2-.1-3-.4-1 .8-2.800 1.600-4.500 1.600.7-.8 1.500-2 1.700-3.200C1.500 12.700.5 11.200.5 9.300.5 5.500 4 2.500 9 2.500z"/><path d="M19 9c3 1 4.500 3.200 4.500 5.500 0 1.600-.8 3-2 4 .2 1.200.8 2.200 1.500 3-1.500 0-3-.6-4-1.400-4 1.200-8-.5-9.500-3.100 4 0 9.500-2.500 9.500-8z"/></svg>
<svg class="i" viewBox="0 0 24 24"><path class="sk t3" d="M9 3C4.500 3 1 5.800 1 9.300c0 1.700 1 3.200 2.300 4.300-.2 1-.8 2-1.500 2.700 1.500 0 3-.6 4.200-1.500 1 .3 2 .4 3 .4 4.500 0 8-2.700 8-6C17 5.800 13.500 3 9 3z"/><path class="sk t3" d="M18.500 9.500c2.800.8 4.500 2.700 4.500 5 0 1.500-.8 2.800-2 3.800.2 1 .8 2 1.400 2.700-1.500 0-2.900-.5-4-1.400-3.300 1-7.400-.2-8.900-2.600"/></svg>
<svg class="i" viewBox="0 0 24 24"><path d="M20.500 1.500c-1 .3-2 .8-3 .3C12.500.5 5.500 3.500 2.800 9.500 1.500 12.500 2 15.500 2 17c0 1-.8 1.800-.5 3 .3 1.800 2 2.700 3.200 2.400 1.500-.3 2.500-1.200 4-.7 5 1.500 10.500-1 13-6.300 1.500-3 1.500-6 1-8.300-.3-1 0-2 .3-3 .3-1.500-1-3-2.500-2.600z"/><path class="bs" d="M6 11c1-2 2.500-3.500 4.500-4" stroke-width="1"/></svg>
<svg class="i" viewBox="0 0 24 24"><path class="sk t2" d="M20.500 3c-1 .3-2 .8-3 .3C13 2 6.500 4.500 4 10c-1.500 3-1 5.500-1 7 0 1-.5 1.500-.3 2.500.3 1.300 1.500 2 2.300 1.800 1.300-.3 2.300-1 3.700-.6 4.500 1.300 9.800-.8 12-5.700 1.300-2.800 1.300-5.300 1-7.500-.2-1 0-1.800.2-2.700.3-1.300-1-2.500-2.400-1.800z"/><path class="sk hairw" d="M6.500 12c.8-2 2-3.500 4-4"/></svg>
<svg class="i" viewBox="0 0 24 24"><path fill-rule="evenodd" d="M15.500 1.500a7 7 0 1 1-2.800 13.400l-2.200 2.300H8.500v2.300H6V22.500H1.500v-4.300l7.300-7.300A7 7 0 0 1 15.500 1.500zm2 3.500a1.700 1.700 0 1 0 0 3.400 1.700 1.700 0 0 0 0-3.400z"/></svg>
<svg class="i" viewBox="0 0 24 24"><path d="M6 1h12v2.500l-2 1.500v5c2 1 3.500 3 3.500 5.500H13V22l-1 1.500L11 22v-6.500H4.500C4.500 13 6 11 8 10V5L6 3.500z"/></svg>
<svg class="i" viewBox="0 0 24 24"><circle cx="8.500" cy="8" r="5"/><circle class="gear sm" cx="8.500" cy="8" r="5.900"/><circle class="b" cx="8.500" cy="8" r="2"/><circle cx="17" cy="17" r="5"/><circle class="gear sm" cx="17" cy="17" r="5.900"/><circle class="b" cx="17" cy="17" r="2"/></svg>
<svg class="i" viewBox="0 0 24 24"><path d="M23 1.500 .5 14.500 7.500 17 19.500 6 10.800 18.500v4.500L14.500 19l4.500 2z"/></svg>
<svg class="i o thin" viewBox="0 0 24 24"><path d="M22 2 2 13.500 7.500 16 19 6M22 2l-3 18-8-3.500L19 6M11 16.500V21.500L14 18.500"/></svg>
<svg class="i o" viewBox="0 0 24 24"><path d="M7 7l-5.500 5L7 17M17 7l5.500 5L17 17M14.500 3 9.500 21"/></svg>
<!-- row 8 -->
<svg class="i o thin round" viewBox="0 0 24 24"><path d="M3.500 12.500 11.500 4.500A3.200 3.200 0 0 1 16 9M7 13l5.500-5.500M9 17l6-6M20.500 11.500 12.500 19.500A3.200 3.200 0 0 1 8 15M11 17l5.500-5.500M18.500 5.500A3 3 0 0 1 20 10M4 13.500A3 3 0 0 0 5.500 18.500"/></svg>
<svg class="i" viewBox="0 0 24 24"><circle cx="12" cy="12" r="10.500"/><path class="bs" d="M1 8.500h22M1 15.500h22" stroke-width="1.500"/><ellipse class="bs" cx="12" cy="12" rx="4.500" ry="11" stroke-width="1.500"/></svg>
<svg class="i" viewBox="0 0 24 24"><path d="M2 3h13a1.500 1.500 0 0 1 1.500 1.500V7h3.500l4 4.500V18h-1.500v.5h-20V4.500A1.500 1.500 0 0 1 2 3z"/><circle cx="6" cy="19" r="3.500"/><circle cx="19" cy="19" r="3.500"/><circle class="b" cx="6" cy="19" r="1.500"/><circle class="b" cx="19" cy="19" r="1.500"/><path class="b" d="M18 9h1.500l2 2.500H18z"/></svg>
<svg class="i" viewBox="0 0 24 24"><path d="M1 10h2V4.500h1.500V10h1.500V4.500h1.500V10h1.500V3h7V11h6.500V22H1z"/><path class="b" d="M3 12.500h2V15H3zM6.500 12.500h2V15h-2zM10 12.500h2V15h-2zM3 17h2v2.500H3zM6.500 17h2v2.500h-2zM10 17h2v2.500h-2zM12 6h2v2.500h-2zM15 13.500h2V16h-2zM19 13.500h2V16h-2zM15 18h2v2h-2zM19 18h2v2h-2z"/></svg>
<svg class="i" viewBox="0 0 24 24"><path fill-rule="evenodd" d="M3 4.500h18a2 2 0 0 1 2 2v3a2.500 2.500 0 0 0 0 5v3a2 2 0 0 1-2 2H3a2 2 0 0 1-2-2v-3a2.500 2.500 0 0 0 0-5v-3a2 2 0 0 1 2-2zM5.500 8v8h13V8z"/></svg>
<svg class="i" viewBox="0 0 24 24"><path d="M12 1l5.500 7h-2l4 6H17l4.500 6.500h-8v2.500h-3v-2.500h-8L7 14H4.500l4-6h-2z"/></svg>
<svg class="i" viewBox="0 0 24 24"><path class="sk t3" d="M.5 9.500c6.500-6 16.500-6 23 0M4.500 13.500c4.500-3.800 10.500-3.800 15 0"/><circle cx="12" cy="18" r="2.200"/></svg>
<svg class="i" viewBox="0 0 24 24"><rect x="3" y="1" width="16" height="8" rx="1.500"/><path class="sk t3" d="M19 4.500h2.500v6L12 13.500v2"/><rect x="9.500" y="14.500" width="5" height="8.500" rx="1.200"/></svg>
<svg class="i o thin" viewBox="0 0 24 24"><circle cx="5.500" cy="16.500" r="4.500"/><circle cx="18.500" cy="16.500" r="4.500"/><path d="M5.500 16.500 10 10.500h6.500l2 6M8 8.500h3.500l3.500 8h-3L8 11M15 6h3"/></svg>
<svg class="i" viewBox="0 0 24 24"><path d="M1 18.500C1.500 13.500 6 10 12 10s10.500 3.500 11 8.500z"/><path class="sk" d="M6 11 3.500 7M18 11l2.500-4"/><circle class="b" cx="7.500" cy="14.500" r="1.100"/><circle class="b" cx="16.500" cy="14.500" r="1.100"/></svg>
<svg class="i" viewBox="0 0 24 24"><path class="sk t3" d="M1 5.500h22M1 12h22M1 18.500h22"/><circle class="wb" cx="15" cy="5.500" r="2.500"/><circle class="wb" cx="18" cy="12" r="2.500"/><circle class="wb" cx="7" cy="18.500" r="2.500"/></svg>
<svg class="i" viewBox="0 0 24 24"><path d="M4 1h4.500v3H11V1h3v3h2.500V1H20v10H4zM4 12.500h16v2a2.500 2.500 0 0 1-2.500 2.500H15v5l-3 1.500L9 22v-5H6.500A2.500 2.500 0 0 1 4 14.500z"/></svg>
<svg class="i o" viewBox="0 0 24 24"><path d="M10.500 2.500l-3 19M17 2.500l-3 19M4 8.500h17.500M3 15.500h17.500"/></svg>
<svg class="i" viewBox="0 0 24 24"><path fill-rule="evenodd" d="M7 1h10v2h-1.500v6.500L21.500 20a2 2 0 0 1-1.800 3H4.300a2 2 0 0 1-1.800-3L8.500 9.500V3H7zM11 3v7.500L8.500 15h7L13 10.500V3z"/></svg>
<svg class="i" viewBox="0 0 24 24"><path d="M8 6V3.500A1.500 1.500 0 0 1 9.500 2h5A1.500 1.500 0 0 1 16 3.500V6h-2V4h-4v2z"/><path d="M3 6h18a2 2 0 0 1 2 2v5.500H1V8a2 2 0 0 1 2-2zM1 15h9v2h4v-2h9v5a2 2 0 0 1-2 2H3a2 2 0 0 1-2-2z"/></svg>
<svg class="i" viewBox="0 0 24 24"><circle cx="12" cy="12" r="10.500"/><path class="b" d="M18 6l-3.500 8.500L6 18l3.500-8.500z"/></svg>
<svg class="i" viewBox="0 0 24 24"><circle class="sk t2" cx="12" cy="12" r="9.800"/><path class="sk t2" d="M16.500 7.500 13.500 13.500 7.500 16.500 10.500 10.500z"/></svg>
<svg class="i" viewBox="0 0 24 24"><path d="M1 3h3.500L4 9H.5zM5.500 3h3.200v6H5.200zM10 3h3v6h-3zM14 3h3.500l.3 6H14.200zM0 10h17v2c0 1.500.5 3-1 3.500V21.500H2V13A5 5 0 0 1 0 10z"/><circle cx="17.500" cy="15.500" r="6.500"/><circle class="b" cx="17.500" cy="16" r="3.500"/><path d="M17.500 7l2 3-3 0z"/></svg>
<svg class="i" viewBox="0 0 24 24"><circle cx="12" cy="4.500" r="2.800"/><path d="M9 8.500h6a1.500 1.500 0 0 1 1.500 1L19 16l-2 .5-1.500-4V22.500h-2.700v-7h-1.600v7H8.500v-10l-1.500 4-2-.5 2.500-6.500a1.500 1.500 0 0 1 1.500-1z"/></svg>
<svg class="i" viewBox="0 0 24 24"><circle cx="12" cy="4.500" r="2.800"/><path d="M9 8.500h6c1 0 1.700.5 2 1.500l2.500 6-1.700 1-.8-1.500v1.500h-2.300v5.500h-2.200V17h-1v5.500H9.300V17H7v-1.500L6.200 17 4.500 16 7 10c.3-1 1-1.500 2-1.500z"/></svg>
<!-- row 9 -->
<svg class="i" viewBox="0 0 24 24"><path d="M5.500 6.500C7 3 9.500.5 12 1.500c.5 0 1 .3 1.500.8 1.500 0 2.300 1.500 2.800 3.200l2 .5 2.700 16L13.500 23.500 2.500 21.500z"/><path class="bs" d="M14.500 11c-2-1-4.500-.5-4.500 1.300 0 2 4.500 2 4.500 4.500 0 2-3 2.700-5.500 1.200" stroke-width="1.900"/></svg>
<svg class="i" viewBox="0 0 24 24"><rect x="3" y="2" width="16" height="20" rx="2"/><path d="M20.500 4h1.500v4h-1.500zM20.500 10h1.500v4h-1.500zM20.500 16h1.500v4h-1.500z"/><circle class="b" cx="11" cy="9.500" r="2.800"/><path class="b" d="M6 17c.5-2 2-3 3.500-3h3c1.500 0 3 1 3.500 3z"/></svg>
<svg class="i" viewBox="0 0 24 24"><rect class="sk" x="4" y="3" width="14" height="18" rx="1.500"/><path d="M20.500 4h1.500v4h-1.500zM20.500 10h1.500v4h-1.500zM20.500 16h1.500v4h-1.500z"/><circle cx="11" cy="9.500" r="2.500"/><path d="M7 16.500c.4-1.700 1.500-2.500 3-2.500h2c1.500 0 2.600.8 3 2.500z"/></svg>
<svg class="i" viewBox="0 0 24 24"><path class="sk t3" d="M6 12V4a1.500 1.500 0 0 1 1.500-1.500H8"/><path d="M7 2 16 5.500 7 9zM1 12h22v2.500H22v1c0 2.500-1.500 4-3.500 4.200V22H16v-2H8v2H5.500v-2.300C3.500 19.500 2 18 2 15.500v-1H1z"/><path class="b" d="M4.500 14.500h15v1c0 1-1 2-2 2h-11c-1 0-2-1-2-2z"/></svg>
<svg class="i" viewBox="0 0 24 24"><rect x="0" y="8" width="2.500" height="8" rx=".5"/><rect x="21.500" y="8" width="2.500" height="8" rx=".5"/><path d="M4 8h4l3-2.500h4L20 8v7.500L14 20a2.500 2.500 0 0 1-3.500 0L4 15.500z"/><path class="bs" d="M8 11.500 12 8l4.500 5.500M11 16l2 2M13 14l2 2" stroke-width="1.400"/></svg>
<svg class="i o hair" viewBox="0 0 24 24"><rect class="fillp" x="0" y="8.500" width="3" height="7.500"/><rect class="fillp" x="21" y="8.500" width="3" height="7.500"/><path d="M4 8.500 8 8l3-2.500h3L20 8M4 15.500 10.500 20.500a2 2 0 0 0 3-.5l6.500-5V8M8.500 11.500 12 8l6 7M11 17l2 2M13 15l2 2"/></svg>
<svg class="i" viewBox="0 0 24 24"><circle cx="7" cy="12" r="6.800"/><ellipse cx="17.200" cy="12" rx="3.400" ry="6.400"/><ellipse cx="22.500" cy="12" rx="1.200" ry="5.700"/></svg>
<svg class="i o snow" viewBox="0 0 24 24"><path d="M12 1v22M2.500 6.500l19 11M21.500 6.500l-19 11M8.500 3 12 6.500 15.500 3M8.500 21 12 17.500 15.500 21M2 11 6.500 9l-1-4.500M22 13l-4.500 2 1 4.500M22 11l-4.500-2 1-4.500M2 13l4.500 2-1 4.500"/></svg>
<svg class="i o thin" viewBox="0 0 24 24"><path d="M12 1v22M2.500 6.500l19 11M21.500 6.500l-19 11M8.500 3 12 6.500 15.500 3M8.500 21 12 17.500 15.500 21M2 11 6.500 9l-1-4.500M22 13l-4.500 2 1 4.500M22 11l-4.500-2 1-4.500M2 13l4.500 2-1 4.500"/></svg>
<svg class="i" viewBox="0 0 24 24"><path d="M1 9.500h8V5l8.500 7L9 19v-4.500H1z"/><path class="sk t3" d="M15 3.200h4.500a2 2 0 0 1 2 2v13.600a2 2 0 0 1-2 2H15"/></svg>
<svg class="i" viewBox="0 0 24 24"><circle cx="12" cy="12" r="10.500"/><path class="b" d="M8 4c2-1 5-1 6.500 0L14 6.500l-2.500 1 1.500 3-3.500 1-3.500-3 .5-2zM15 13l3.500-2 2.500 1c0 3-1 5.500-3.500 7.500L14.500 21 15 17z"/></svg>
<svg class="i" viewBox="1 2 22 22"><path d="M6 21A5.500 5.500 0 0 1 -.5 15.500 5.500 5.500 0 0 1 4.500 10.200 5.200 5.200 0 0 1 11 5.800 6.300 6.300 0 0 1 20 10.300 5.500 5.500 0 0 1 25 15.500 5.500 5.500 0 0 1 20 21z"/><path class="b" d="M12 9l5 5h-3v4.500h-4V14H7z"/></svg>
<svg class="i" viewBox="0 0 24 24"><path d="M5 2h4.500v2.500H5zM14.500 2H19v2.500h-4.500zM5 5.500h5V10h.5v11.500a1 1 0 0 1-1 1H2a1 1 0 0 1-1-1v-6.500zM14 5.500h5l4 9.500v6.500a1 1 0 0 1-1 1h-7.500a1 1 0 0 1-1-1V10H14zM11 11.500h2v4h-2z"/></svg>
<svg class="i" viewBox="0 0 24 24"><path d="M12 1.500A10.500 10.500 0 1 0 12 22.500c2 0 2-1.500 1-3-1-2 .5-3.500 3-3.500h3c2.500 0 3.500-2 3.500-4C22.500 6 18 1.500 12 1.500z"/><circle class="b" cx="6.500" cy="12" r="1.900"/><circle class="b" cx="8.500" cy="7" r="1.900"/><circle class="b" cx="14" cy="5.800" r="1.900"/><circle class="b" cx="18" cy="10" r="1.900"/></svg>
<svg class="i o hair" viewBox="0 0 24 24"><path d="M12 2l10 6.500v7L12 22 2 15.500v-7zM12 2v6.500M12 15.500V22M2 8.500l10 7 10-7M2 15.500l10-7 10 7"/></svg>
<svg class="i" viewBox="0 0 24 24"><path d="M12 1 22 6l-10 5L2 6zM4.500 9.500 12 13.300 19.500 9.500l3 1.500-10.500 5.300L1.500 11zM4.500 14.500 12 18.300l7.500-3.800 3 1.500L12 21.500 1.500 16z"/></svg>
<svg class="i" viewBox="0 0 24 24"><circle cx="5.500" cy="6" r="3"/><circle cx="18.500" cy="6" r="3"/><circle cx="12" cy="9.500" r="3.500"/><path d="M1 15a3 3 0 0 1 3-3h2.500c-1 1-1.500 2-1.500 3.500H1zM23 15a3 3 0 0 0-3-3h-2.500c1 1 1.500 2 1.500 3.500h4zM6.500 21v-3a3.500 3.500 0 0 1 3.500-3.500h4a3.500 3.500 0 0 1 3.500 3.500v3z"/></svg>
<svg class="i" viewBox="0 0 24 24"><rect x="0" y="5" width="24" height="14" rx="7"/><path class="b" d="M6 10h1.500V8.500h2V10H11v2H9.500v1.500h-2V12H6z"/><circle class="b" cx="15" cy="12" r="1.500"/><circle class="b" cx="19" cy="12" r="1.500"/></svg>
<svg class="i" viewBox="0 0 24 24"><path d="M7 5V3.500A1.500 1.500 0 0 1 8.500 2h5A1.500 1.500 0 0 1 15 3.500V5h-2V4H9v1z"/><path d="M2 5h18a2 2 0 0 1 2 2v3H0V7a2 2 0 0 1 2-2zM0 12h8.500v2h4.500c-1 1-1 2-1 3.500 0 1 .2 2 .7 3H2a2 2 0 0 1-2-2z"/><circle cx="18.500" cy="18" r="6"/><path class="bs" d="M18.500 14.500V18h3" stroke-width="1.600"/></svg>
<svg class="i" viewBox="0 0 24 24"><path d="M-.5 17c0-1.500 1-3 4-3.500C6 9 11 7.500 14.500 10c1.500 1 2.300 2 3 3.500 3.500-.2 6.500 1 6.500 3.500z"/><path class="sk t3" d="M9 19h13l-1.500-1.500"/></svg>
<!-- row 10 (clipped) -->
<svg class="i" viewBox="0 0 24 24"><circle cx="12" cy="11" r="9"/></svg>
<svg class="i" viewBox="0 0 24 24"><path d="M12 2l2 3 3.500-2 .5 4 4 .5-2 3.500 2 3H2l2-3-2-3.500 4-.5.5-4L10 5z"/></svg>
<svg class="i o hair" viewBox="0 0 24 24"><path d="M12 3l2 3 3.500-2 .5 4 4 .5-2 3.500M12 3l-2 3-3.500-2L6 8l-4 .5L4 12"/></svg>
<svg class="i o t2" viewBox="0 0 24 24"><path d="M2 13c0-3 2-5 5-4.500C9 5 14 5 15 8c1-3 7-3 7 1"/></svg>
<svg class="i" viewBox="0 0 24 24"><path d="M11 12 19 2.500l2 2L16 12z"/></svg>
<svg class="i o hair" viewBox="0 0 24 24"><path d="M7 14C8 5 10 3 12 3s4 2 5 11"/></svg>
<svg class="i" viewBox="0 0 24 24"><path d="M1 12c2-1 3-2 4-2 2-3.500 10-3.500 13 0 1 0 2.500 1 4.500 2z"/></svg>
<svg class="i" viewBox="0 0 24 24"><ellipse cx="12" cy="7" rx="6" ry="4"/><path d="M2 6c1 3 5 5.500 10 5.500S21 9 22 6v6H2z"/></svg>
<svg class="i" viewBox="0 0 24 24"><path d="M3 2.500h18L24 10v3H0v-3z"/></svg>
<svg class="i" viewBox="0 0 24 24"><path d="M3 4h14l4 3v5H3z"/></svg>
<svg class="i" viewBox="0 0 24 24"><path d="M2 2h9v3h2V2h9v10H2z"/></svg>
<svg class="i" viewBox="0 0 24 24"><path d="M12 2l10 5.500V12H2V7.500z"/></svg>
<svg class="i" viewBox="0 0 24 24"><path d="M14 1l1 7h6v4H3V9h7z"/></svg>
<svg class="i o hair" viewBox="0 0 24 24"><circle cx="12" cy="12" r="9"/></svg>
<svg class="i" viewBox="0 0 24 24"><path d="M5 6h4v6H5zM11 2h4v10h-4zM17 6h3v6h-3z"/></svg>
<svg class="i" viewBox="0 0 24 24"><path d="M0 5l6 2 6-3 6 3 6-2v7H0z"/></svg>
<svg class="i o hair" viewBox="0 0 24 24"><circle cx="12" cy="5" r="2.500"/><path d="M12 7.500V14"/></svg>
<svg class="i o" viewBox="0 0 24 24"><path d="M6 12l3-3M15 12l3-3"/></svg>
<svg class="i" viewBox="0 0 24 24"><path fill-rule="evenodd" d="M12 3a5 5 0 0 1 5 5v2h6v2H1v-2h6V8a5 5 0 0 1 5-5zm0 2a3 3 0 0 0-3 3v2h6V8a3 3 0 0 0-3-3z"/></svg>
<svg class="i" viewBox="0 0 24 24"><path d="M12 4a9 8 0 0 1 9 8H3a9 8 0 0 1 9-8z"/><path class="bs" d="M12 3v10" stroke-width="1.500"/></svg>
    </div>
    <div class="scrollbar">
      <span class="sb-arrow up"></span>
      <span class="sb-thumb"></span>
      <span class="sb-track"></span>
      <span class="sb-arrow down"></span>
    </div>
  </div>
</div>
</body>
</html>
```

FILE: styles.css
```css
* { box-sizing: border-box; }
html, body { margin: 0; padding: 0; height: 915px; overflow: hidden; }
body {
  position: relative;
  background: #f0f0f1;
  color: #3c434a;
  font-family: Roboto, "DejaVu Sans", sans-serif;
  font-size: 12px;
  line-height: 20px;
  direction: rtl;
  display: flex;
  flex-direction: column;
}
a { color: inherit; text-decoration: none; }
p { margin: 0; }
.latin { font-size: 14px; line-height: 1; }

/* admin bar */
.adminbar {
  height: 32px;
  flex: none;
  background: #1d2327;
  color: #f0f0f1;
  display: flex;
  justify-content: space-between;
  align-items: center;
  padding: 0 8px 0 10px;
}
.ab-group { display: flex; align-items: center; }
.ab-wp { width: 20px; height: 20px; margin-left: 16px; }
.ab-ring { fill: none; stroke: #a7aaad; stroke-width: 2; }
.wp-w {
  fill: #a7aaad;
  font-family: "Liberation Serif", serif;
  font-weight: 700;
  font-size: 19px;
  text-anchor: middle;
}
.wp-w.light { fill: #f0f0f1; }
.ab-ic { width: 16px; height: 16px; fill: #a7aaad; flex: none; }
.ab-ic.home { margin-left: 8px; }
.ab-ic.cm { width: 15px; height: 15px; margin-right: 18px; margin-left: 9px; }
.ab-ic.plus { width: 15px; height: 15px; margin-right: 18px; margin-left: 10px; }
.ab-ic.usr { margin-right: 8px; }
.ab-text { font-size: 13px; white-space: nowrap; }
.ab-text.greet { font-size: 13.5px; }
.zero { color: #a7aaad; }

/* shell */
.shell { flex: 1; display: flex; min-height: 0; }
.sidebar {
  width: 160px;
  flex: none;
  background: #1d2327;
  padding-top: 11px;
  color: #f0f0f1;
}
.menu-item {
  height: 36px;
  display: flex;
  align-items: center;
  gap: 9px;
  padding-right: 9px;
  font-size: 13.5px;
}
.menu-item.first { margin-bottom: 12px; }
.menu-item.active { background: #2271b1; color: #fff; padding-bottom: 3px; }
.menu-item.active .mi { fill: #fff; }
.menu-item.media { margin-top: -2px; }
.menu-item.sep { margin-top: 12px; }
.menu-item.tight { margin-top: -1px; }
.mi { width: 18px; height: 18px; fill: #a7aaad; flex: none; }
.mi-cut { fill: #1d2327; }
.submenu {
  background: #2c3338;
  height: 128px;
  padding: 7px 12px 0 0;
  display: flex;
  flex-direction: column;
  color: #c3c4c7;
}
.submenu a { height: 28px; line-height: 28px; font-size: 13px; }
.submenu .current { color: #fff; font-weight: 700; font-size: 12px; }

/* main */
.main {
  flex: 1;
  min-width: 0;
  display: flex;
  flex-direction: column;
  padding: 0 22px 0 20px;
}
.top-row {
  display: flex;
  justify-content: space-between;
  align-items: flex-start;
  height: 53px;
}
.title { margin: 17px 0 0; font-size: 19.5px; line-height: 28px; font-weight: 700; color: #1d2327; }
.meta-links { display: flex; gap: 6px; }
.meta-btn {
  height: 29px;
  padding: 0 16px 2px 18px;
  background: #fff;
  border: 1px solid #c3c4c7;
  border-top: 0;
  border-radius: 0 0 4px 4px;
  color: #646970;
  font: inherit;
  font-size: 12.5px;
}
.caret {
  display: inline-block;
  width: 0;
  height: 0;
  border: 4px solid transparent;
  border-top: 5px solid #646970;
  border-bottom: 0;
  margin-right: 3px;
  vertical-align: middle;
}

.columns { display: flex; gap: 20px; flex: 1; min-height: 0; }
.col-form { width: 390px; flex: none; padding-top: 546px; }
.col-table { flex: 1; min-width: 0; }

.hint { color: #646970; font-size: 12.5px; }
.hint.tail { margin-bottom: 14px; font-size: 13px; }
.hint .latin { font-size: 14px; }
.hint b { font-weight: 500; font-size: 13.5px; }
.field-label { display: block; color: #3c434a; height: 22px; line-height: 20px; font-size: 13.5px; }
.field-row { display: flex; gap: 29px; align-items: center; padding-right: 1px; }
.field-input {
  width: 200px;
  height: 30px;
  background: #fff;
  border: 1px solid #8c8f94;
  border-radius: 4px;
}
.btn-primary {
  height: 30px;
  background: #2271b1;
  color: #fff;
  border: 1px solid #2271b1;
  border-radius: 3px;
  font: inherit;
  -webkit-text-stroke: .3px #fff;
}
.btn-primary.pick { width: 93px; padding: 0; font-size: 13px; }
.link { color: #2271b1; text-decoration: underline; }
.example { margin-top: 4px; }
.submit { width: 109px; padding: 0; margin-top: 15px; display: block; font-size: 11.8px; }

.search-row { display: flex; gap: 4px; flex-direction: row-reverse; justify-content: flex-start; }
.search-btn {
  height: 30px;
  width: 114px;
  padding: 0;
  background: #f6f7f7;
  color: #2271b1;
  border: 1px solid #2271b1;
  border-radius: 3px;
  font: inherit;
  font-size: 13px;
}
.search-input {
  width: 196px;
  height: 30px;
  background: #fff;
  border: 1px solid #8c8f94;
  border-radius: 4px;
}
.count { margin-top: 14px; color: #3c434a; text-align: left; }
.count.lower { margin-top: 15px; }
.cats {
  width: 100%;
  margin-top: 14px;
  border: 1px solid #c3c4c7;
  border-collapse: separate;
  border-spacing: 0;
  background: #fff;
}
.cats th, .cats td { font-weight: 400; text-align: right; padding: 6px 10px; vertical-align: top; color: #2271b1; font-size: 14px; }
.cats thead th { height: 37px; border-bottom: 1px solid #c3c4c7; }
.cats tfoot th { height: 36px; border-top: 1px solid #c3c4c7; }
.cats tbody td { height: 59px; background: #f6f7f7; }
.cats .num { width: 104px; text-align: center; padding-left: 0; padding-right: 0; }
.cats .val { text-align: left; padding-left: 33px; }
.note { margin-top: 30px; padding-left: 7px; text-align: left; white-space: nowrap; color: #646970; }

.footer {
  height: 44px;
  flex: none;
  display: flex;
  justify-content: space-between;
  align-items: center;
  margin-right: -3px;
  padding-top: 2px;
  color: #50575e;
  font-size: 12.5px;
}
.version { font-size: 13px; }

/* picker */
.picker {
  position: absolute;
  left: 139px;
  top: 87px;
  width: 1088px;
  height: 549px;
  display: flex;
  flex-direction: column;
  background: #f0f0f1;
  border: 1px solid #8c8f94;
  border-radius: 4px;
  overflow: hidden;
}
.picker-head {
  height: 49px;
  flex: none;
  display: flex;
  justify-content: space-between;
  align-items: center;
  padding: 2px 15px 0 13px;
  background: #2271b1;
  border-bottom: 1px solid #8c8f94;
}
.picker-title { margin: 0 0 4px; font-size: 15px; font-weight: 400; color: #fff; }
.picker-tools { display: flex; align-items: center; gap: 18px; }
.picker-search {
  width: 200px;
  height: 30px;
  background: #fff;
  border: 1px solid #c3c4c7;
  border-radius: 4px;
  text-align: center;
  font: inherit;
  font-size: 14px;
}
.picker-search::placeholder { color: #50575e; opacity: 1; }
.picker-close { width: 20px; height: 20px; stroke: #fff; stroke-width: 3.4; fill: none; margin-top: 4px; }
.picker-body { flex: 1; min-height: 0; display: flex; padding: 15px 0 12px; }
.grid {
  width: 1070px;
  flex: none;
  height: 471px;
  overflow: hidden;
  display: grid;
  grid-template-columns: repeat(20, 53.5px);
  grid-auto-rows: 50px;
  place-items: center;
}
.i { width: 24px; height: 24px; fill: #111; overflow: visible; }
.i.o { fill: none; stroke: #111; stroke-width: 2.2; }
.i.o.t { stroke-width: 1.8; }
.i.o.t2 { stroke-width: 1.8; }
.i.o.thin { stroke-width: 1.6; }
.i.o.hair { stroke-width: 1.3; }
.i.o.snow { stroke-width: 2.6; }
.i.o.slack { stroke-width: 3.4; stroke-linecap: round; }
.i.o.round { stroke-linecap: round; }
.i .fillp { fill: #111; stroke: none; }
.i .b { fill: #f0f0f1; }
.i .bs { fill: none; stroke: #f0f0f1; stroke-width: 2; }
.i .sk { fill: none; stroke: #111; stroke-width: 1.8; }
.i .sk.t2 { stroke-width: 1.6; }
.i .sk.t3 { stroke-width: 2.2; }
.i .sk.hairw { stroke-width: 1; }
.i .wb { fill: #f0f0f1; stroke: #111; stroke-width: 1.6; }
.i .gear { fill: none; stroke: #111; stroke-width: 3; stroke-dasharray: 3.800 3.900; }
.i .gear.sm { stroke-width: 2; stroke-dasharray: 2.300 2.330; }
.i-text { color: #111; direction: ltr; }
.stripe { font-family: Roboto, sans-serif; font-weight: 700; font-size: 11px; letter-spacing: -.3px; }
.glyph-a { font-family: "Liberation Serif", serif; font-weight: 700; font-size: 28px; line-height: 24px; }
.scrollbar { flex: 1; display: flex; flex-direction: column; height: 471px; align-items: center; padding-right: 1px; }
.sb-arrow { height: 17px; width: 13px; flex: none; display: flex; align-items: center; justify-content: center; }
.sb-arrow::before { content: ""; border: 4px solid transparent; }
.sb-arrow.up::before { border-top: 0; border-bottom: 5px solid #a3a3a3; }
.sb-arrow.down::before { border-bottom: 0; border-top: 5px solid #505050; }
.sb-thumb { height: 41px; width: 13px; flex: none; background: #c1c1c1; }
.sb-track { flex: 1; }
```
